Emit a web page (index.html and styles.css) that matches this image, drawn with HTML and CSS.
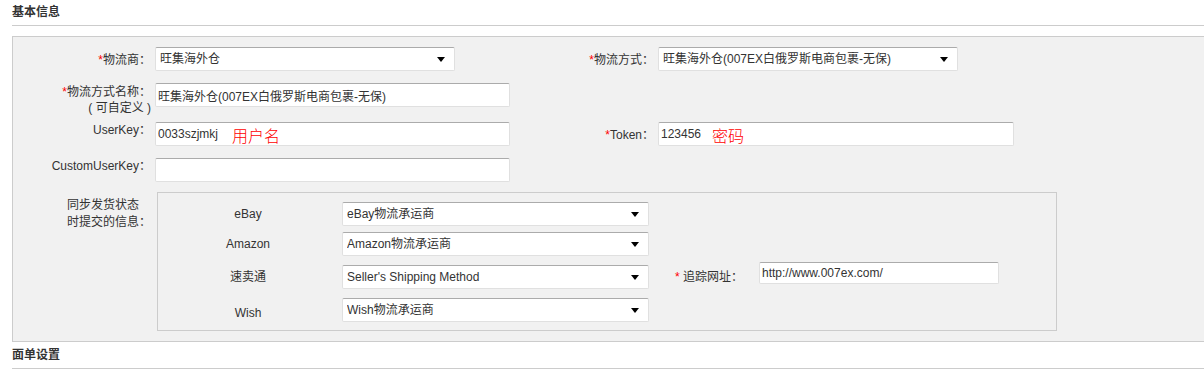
FILE: index.html
```html
<!DOCTYPE html>
<html lang="zh-CN">
<head>
  <meta charset="UTF-8" />
  <title>物流设置</title>
  <link rel="stylesheet" href="styles.css">
</head>
<body>
  <h3 class="section-title">基本信息</h3>

  <div class="panel">
    <div class="form-grid">
      <div class="label label-select"><span class="req">*</span>物流商：</div>
      <div class="field">
        <span class="select-wrap w300">
          <select><option>旺集海外仓</option></select>
        </span>
      </div>
      <div class="label label-select"><span class="req">*</span>物流方式：</div>
      <div class="field">
        <span class="select-wrap w300">
          <select><option>旺集海外仓(007EX白俄罗斯电商包裹-无保)</option></select>
        </span>
      </div>

      <div class="label label-text"><span class="req">*</span>物流方式名称：<br>( 可自定义 )</div>
      <div class="field">
        <input type="text" class="text w355" value="旺集海外仓(007EX白俄罗斯电商包裹-无保)" />
      </div>
      <div></div>
      <div></div>

      <div class="label label-top">UserKey：</div>
      <div class="field">
        <input type="text" class="text w355" value="0033szjmkj" />
        <span class="hint hint-user">用户名</span>
      </div>
      <div class="label label-token"><span class="req">*</span>Token：</div>
      <div class="field">
        <input type="text" class="text w356" value="123456" />
        <span class="hint hint-pass">密码</span>
      </div>

      <div class="label label-top">CustomUserKey：</div>
      <div class="field">
        <input type="text" class="text w355" value="" />
      </div>
      <div></div>
      <div></div>

      <div class="label label-sync"><span class="sync-text">同步发货状态<br>时提交的信息：</span></div>
      <div class="sync-box">
        <div class="sync-name">eBay</div>
        <span class="select-wrap w307">
          <select><option>eBay物流承运商</option></select>
        </span>
        <div></div>
        <div></div>

        <div class="sync-name">Amazon</div>
        <span class="select-wrap w307">
          <select><option>Amazon物流承运商</option></select>
        </span>
        <div></div>
        <div></div>

        <div class="sync-name">速卖通</div>
        <span class="select-wrap w307">
          <select><option>Seller's Shipping Method</option></select>
        </span>
        <div class="track-label"><span class="req">*</span> 追踪网址：</div>
        <input type="text" class="text track-input" value="http://www.007ex.com/" />

        <div class="sync-name sync-low">Wish</div>
        <span class="select-wrap w307">
          <select><option>Wish物流承运商</option></select>
        </span>
        <div></div>
        <div></div>
      </div>
    </div>
  </div>

  <h3 class="section-title section-second">面单设置</h3>
</body>
</html>
```

FILE: styles.css
```css
body {
  margin: 0;
  background: #fff;
  color: #333;
  font-family: "Liberation Sans", Arial, "Noto Sans CJK SC", sans-serif;
  font-size: 12px;
}

.section-title {
  margin: 0 0 0 12px;
  height: 25px;
  line-height: 24px;
  font-size: 12px;
  font-weight: bold;
  color: #333;
  border-bottom: 1px solid #ccc;
}

.section-second {
  height: 26px;
  line-height: 26px;
}

.panel {
  margin: 10px 0 0 12px;
  padding: 10px 0 10px;
  background: #f1f1f1;
  border: 1px solid #ccc;
  border-right: none;
}

.form-grid {
  display: grid;
  grid-template-columns: 138px 355px 140px 1fr;
  grid-template-rows: 24px 27px 24px 24px auto;
  column-gap: 4px;
  row-gap: 12px;
}

.label {
  text-align: right;
  line-height: 16px;
  white-space: nowrap;
}

.label-select { padding-top: 5px; }
.label-text { padding-top: 1px; }
.label-top { padding-top: 0; }
.label-token { padding-top: 5px; }
.label-sync { padding-top: 5px; margin-top: -2px; }

.req {
  color: #f00;
}

.sync-text {
  display: inline-block;
  width: 84px;
  text-align: left;
  line-height: 17px;
}

.field {
  position: relative;
}

/* inputs and selects */
.text {
  box-sizing: border-box;
  height: 24px;
  margin: 0;
  padding: 0 2px;
  border: 1px solid #e0e0e0;
  border-top-color: #ababab;
  border-radius: 2px;
  background: #fff;
  color: #333;
  font: 12px "Liberation Sans", Arial, "Noto Sans CJK SC", sans-serif;
  outline: none;
}

.w355 { width: 355px; }
.w356 { width: 356px; }
.w300 { width: 300px; }
.w307 { width: 307px; }

.select-wrap {
  position: relative;
  display: block;
  height: 24px;
}

.select-wrap select {
  box-sizing: border-box;
  width: 100%;
  height: 24px;
  margin: 0;
  padding: 0 20px 0 4px;
  -webkit-appearance: none;
  appearance: none;
  border: 1px solid #e0e0e0;
  border-top-color: #ababab;
  border-radius: 2px;
  background: #fff;
  color: #333;
  font: 12px "Liberation Sans", Arial, "Noto Sans CJK SC", sans-serif;
  outline: none;
}

.select-wrap::after {
  content: "";
  position: absolute;
  right: 10px;
  top: 10px;
  border-left: 4px solid transparent;
  border-right: 4px solid transparent;
  border-top: 5px solid #000;
  pointer-events: none;
}

.hint {
  position: absolute;
  top: 1px;
  line-height: 24px;
  font-size: 16px;
  color: #f00;
  font-family: "Noto Sans CJK SC", sans-serif;
  font-weight: 300;
}

.hint-user { left: 77px; }
.hint-pass { left: 54px; }

/* sync settings box */
.sync-box {
  grid-column: 2 / 5;
  width: 898px;
  margin: -2px 0 0 2px;
  padding: 9px 0 8px;
  border: 1px solid #ccc;
  background: #f1f1f1;
  display: grid;
  grid-template-columns: 180px 307px 102px 240px;
  grid-template-rows: 30px 33px 33px 24px;
  column-gap: 4px;
  align-items: start;
}

.sync-name {
  text-align: center;
  line-height: 24px;
}

.sync-low {
  padding-top: 3px;
}

.track-label {
  text-align: right;
  padding-right: 12px;
  line-height: 24px;
  white-space: nowrap;
}

.track-input {
  width: 240px;
  height: 22px;
  margin-top: -3px;
}
```
